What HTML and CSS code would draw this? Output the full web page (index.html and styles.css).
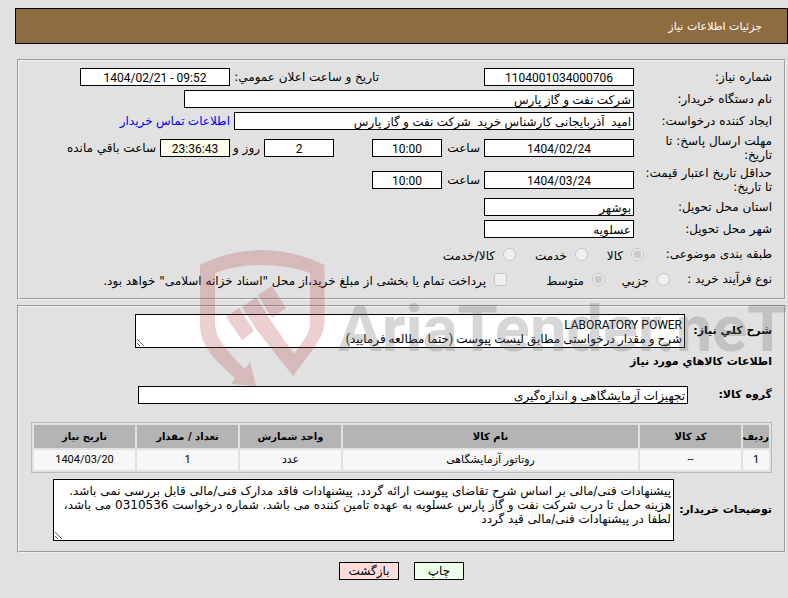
FILE: index.html
```html
<!DOCTYPE html>
<html lang="fa" dir="rtl">
<head>
<meta charset="utf-8">
<title>جزئیات اطلاعات نیاز</title>
<link rel="stylesheet" href="styles.css">
</head>
<body>
<header class="title-bar"><h1>جزئیات اطلاعات نیاز</h1></header>
<main>
<form>
<fieldset class="panel">
  <div class="row">
    <label class="name" for="no">شماره نیاز:</label>
    <input class="box w150 mid" id="no" value="1104001034000706" readonly>
    <label class="announce" for="announce">تاریخ و ساعت اعلان عمومي:</label>
    <input class="box w150 mid" id="announce" dir="ltr" value="1404/02/21 - 09:52" readonly>
  </div>
  <div class="row">
    <label class="name" for="org">نام دستگاه خریدار:</label>
    <input class="box w450" id="org" value="شرکت نفت و گاز پارس" readonly>
  </div>
  <div class="row">
    <label class="name" for="creator">ایجاد کننده درخواست:</label>
    <input class="box w400" id="creator" value="امید  آذربایجانی کارشناس خرید  شرکت نفت و گاز پارس" readonly>
    <a href="#contact">اطلاعات تماس خریدار</a>
  </div>
  <div class="row">
    <label class="name" for="reply">مهلت ارسال پاسخ: تا تاریخ:</label>
    <input class="box w150 mid" id="reply" value="1404/02/24" readonly>
    <label class="hour" for="reply-hour">ساعت</label>
    <input class="box w70 mid" id="reply-hour" value="10:00" readonly>
    <input class="box w70 mid days" aria-label="روز" id="days" value="2" readonly>
    <label class="and" for="days">روز و</label>
    <input class="box w70 mid left" id="left" value="23:36:43" readonly>
    <label for="left">ساعت باقي مانده</label>
  </div>
  <div class="row">
    <label class="name" for="valid">حداقل تاریخ اعتبار قیمت: تا تاریخ:</label>
    <input class="box w150 mid" id="valid" value="1404/03/24" readonly>
    <label class="hour" for="valid-hour">ساعت</label>
    <input class="box w70 mid" id="valid-hour" value="10:00" readonly>
  </div>
  <div class="row">
    <label class="name" for="province">استان محل تحویل:</label>
    <input class="box w150" id="province" value="بوشهر" readonly>
  </div>
  <div class="row">
    <label class="name" for="city">شهر محل تحویل:</label>
    <input class="box w150" id="city" value="عسلویه" readonly>
  </div>
  <div class="row choices subject">
    <span class="name">طبقه بندی موضوعی:</span>
    <input type="radio" name="subject" id="s1" checked disabled><label class="s1" for="s1">کالا</label>
    <input type="radio" name="subject" id="s2" disabled><label class="s2" for="s2">خدمت</label>
    <input type="radio" name="subject" id="s3" disabled><label for="s3">کالا/خدمت</label>
  </div>
  <div class="row choices process">
    <span class="name short">نوع فرآیند خرید :</span>
    <input type="radio" name="process" id="p1" disabled><label class="p1" for="p1">جزیي</label>
    <input type="radio" name="process" id="p2" checked disabled><label class="p2" for="p2">متوسط</label>
    <input type="checkbox" id="treasury" disabled><label for="treasury">پرداخت تمام یا بخشی از مبلغ خرید،از محل "اسناد خزانه اسلامی" خواهد بود.</label>
  </div>
</fieldset>

<fieldset class="panel">
  <div class="row strong">
    <label class="summary-name" for="summary">شرح کلي نیاز:</label>
    <textarea class="box summary" id="summary" readonly>LABORATORY POWER
شرح و مقدار درخواستی مطابق لیست پیوست (حتما مطالعه فرمایید)</textarea>
  </div>
  <h2>اطلاعات کالاهاي مورد نیاز</h2>
  <div class="row strong">
    <label class="group-name" for="group">گروه کالا:</label>
    <input class="box w550" id="group" value="تجهیزات آزمایشگاهی و اندازه‌گیری" readonly>
  </div>
  <table>
    <colgroup><col class="c-row"><col class="c-mid"><col><col class="c-mid"><col class="c-mid"><col class="c-mid"></colgroup>
    <thead><tr><th>ردیف</th><th>کد کالا</th><th>نام کالا</th><th>واحد شمارش</th><th>تعداد / مقدار</th><th>تاریخ نیاز</th></tr></thead>
    <tbody><tr><td>1</td><td>--</td><td>روتاتور آزمایشگاهی</td><td>عدد</td><td>1</td><td>1404/03/20</td></tr></tbody>
  </table>
  <div class="row strong">
    <label class="notes-name" for="notes">توضیحات خریدار:</label>
    <textarea class="box notes" id="notes" readonly>پیشنهادات فنی/مالی بر اساس شرح تقاضای پیوست ارائه گردد. پیشنهادات فاقد مدارک فنی/مالی قابل بررسی نمی باشد.
هزینه حمل تا درب شرکت نفت و گاز پارس عسلویه به عهده تامین کننده می باشد. شماره درخواست 0310536 می باشد،
لطفا در پیشنهادات فنی/مالی قید گردد</textarea>
  </div>
</fieldset>
<div class="actions">
  <button class="print" type="button">چاپ</button>
  <button class="back" type="button">بازگشت</button>
</div>
</form>
</main>
<svg class="watermark" viewBox="200 250 588 140" direction="ltr">
  <g class="shield">
    <path d="M200 265Q230 250 262 250T324.500 265V323C324 333 318 343 310 353L293 376L256 329L242 307L256 297L271 321L294 354L303 341C308 334 310 330 310 321V273Q287 265 262 265T215 273V321C215 331 218 338 222 343C228 352 236 361 245 369L250 362L256 386L231 384L235 378C226 370 216 361 210 353C203 343 200 335 200 323Z"/>
    <path d="M226 317L239 308L254 331L242 340Z"/>
    <path d="M258 295L272 286L286 308L272 318Z"/>
  </g>
  <text x="338" y="351">AriaTender.neT</text>
</svg>
</body>
</html>
```
FILE: styles.css
```css
* { box-sizing: border-box; }

body {
  margin: 0;
  padding: 8px 0 0 15px;
  position: relative;
  overflow-x: hidden;
  background: #e1e1e1;
  color: #000;
  font: 12px/14px "DejaVu Sans", sans-serif;
}

.title-bar {
  height: 36px;
  padding: 2px 25px 0;
  display: flex;
  align-items: center;
  background: #8f6c40;
  border: 1px solid #000;
}

h1, h2 { margin: 0; font-size: 11px; line-height: 14px; }
h1 { color: #fff; font-weight: normal; }

main { padding: 15px 2px 0 2px; }

.panel {
  min-width: 0;
  margin: 0 0 5px;
  padding: 7px 12px 10px;
  border: 2px groove #f0f0f0;
}

.row { display: flex; align-items: center; gap: 4px; margin-bottom: 4px; white-space: nowrap; }
.name { width: 134px; flex: none; white-space: normal; }
.short { width: 98px; }

.box {
  margin: 0;
  height: 18px;
  padding: 1px 2px 0;
  border: 1px solid #000;
  border-radius: 0;
  background: #fff;
  color: #000;
  font: 12px/14px "Liberation Sans", "DejaVu Sans", sans-serif;
}
.mid { text-align: center; font-family: Roboto, "DejaVu Sans", sans-serif; }
.w70 { width: 70px; }
.w150 { width: 150px; }
.w400 { width: 400px; }
.w450 { width: 450px; }
.w550 { width: 550px; }
.announce { width: 246px; padding-right: 101px; }
.hour { width: 34px; }
.and { width: 26px; }
.days { margin-right: 34px; }
.left { background: #ffffec; }
a { color: #00f; text-decoration: none; font-family: "Liberation Sans", "DejaVu Sans", sans-serif; }

.choices input { width: 13px; height: 13px; margin: 0 0 0 4px; flex: none; }
.choices label { padding-top: 4px; }
.subject { height: 24px; }
.process { height: 18px; }
.subject .name { width: 124px; }
.s1 { width: 31px; }
.s2 { width: 47px; }
.p1 { width: 40px; }
.p2 { width: 73px; }

.strong label { font-size: 11px; }
.strong label, h2 { font-weight: bold; }
.summary-name { width: 83px; }
.summary { width: 550px; height: 34px; padding: 3px 2px 0; overflow: hidden; font-family: Roboto, "DejaVu Sans", sans-serif; }
h2 { margin: 7px 0 17px; }
.group-name { width: 80px; }

table {
  width: 100%;
  margin: 18px 0 6px;
  table-layout: fixed;
  border: 1px solid #bbb;
  border-spacing: 2px;
  text-align: center;
  font-size: 11px;
}
th, td { padding: 0; }
th { height: 23px; background: #b4b4b4; font-size: 10px; }
td { height: 20px; background: #f7f7f7; font-family: Roboto, "DejaVu Sans", sans-serif; }
.c-row { width: 26px; }
.c-mid { width: 101px; }
.notes-name { width: 94px; }
.notes { width: 621px; height: 62px; padding: 4px 2px; overflow: hidden; font-family: "DejaVu Sans", sans-serif; }
.panel > .row:last-child { margin-bottom: 0; }

.actions { display: flex; justify-content: center; gap: 15px; padding-top: 4px; }
button { height: 18px; padding: 0; border: 1px solid #000; color: #000; font: inherit; }
.print { width: 50px; background: #ecffec; }
.back { width: 60px; background: #ffdcdc; }

.watermark {
  position: absolute;
  top: 250px;
  left: 200px;
  width: 588px;
  height: 140px;
  pointer-events: none;
}
.shield { fill: #b43c42; opacity: .24; }
.watermark text {
  font: bold 65px Roboto, sans-serif;
  fill: #707070;
  opacity: .27;
}
```
